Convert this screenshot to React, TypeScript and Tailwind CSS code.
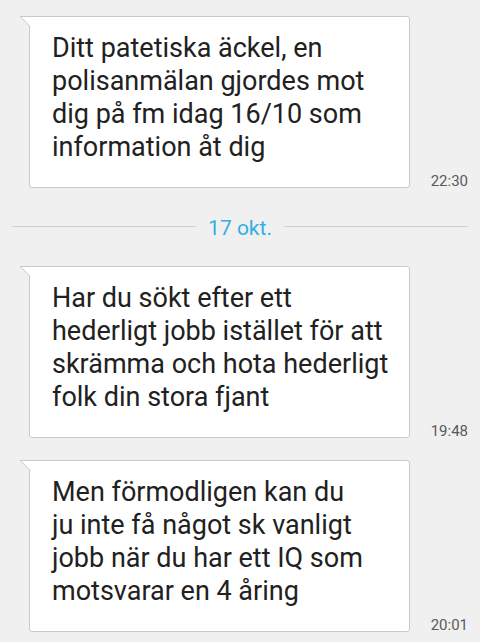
import * as React from "react"

interface Message {
  lines: string[]
  time: string
}

const first: Message[] = [
  {
    lines: ["Ditt patetiska äckel, en", "polisanmälan gjordes mot", "dig på fm idag 16/10 som", "information åt dig"],
    time: "22:30",
  },
]

const second: Message[] = [
  {
    lines: ["Har du sökt efter ett", "hederligt jobb istället för att", "skrämma och hota hederligt", "folk din stora fjant"],
    time: "19:48",
  },
  {
    lines: ["Men förmodligen kan du", "ju inte få något sk vanligt", "jobb när du har ett IQ som", "motsvarar en 4 åring"],
    time: "20:01",
  },
]

function Bubble({ msg }: { msg: Message }) {
  return (
    <div className="flex items-end pl-[29px] pr-[12px]">
      <div className="relative w-[381px] bg-white border border-[#c9c9c9] rounded-[3px] rounded-tl-none pt-[15px] pb-[23px] pl-[22px] pr-2">
        {/* tail */}
        <svg className="absolute left-[-10px] top-[-1px]" width="11" height="12" viewBox="0 0 11 12">
          <path d="M0.5 0.5 L11 0.5 L11 11 Z" fill="#ffffff" />
          <path d="M0 0.5 L11 0.5 M0.5 0.5 L10 10.5" stroke="#c9c9c9" strokeWidth="1" fill="none" />
        </svg>
        <p className="text-[27px] leading-[33px] text-[#212121]">
          {msg.lines.map((l, i) => (
            <React.Fragment key={i}>
              {l}
              {i < msg.lines.length - 1 && <br />}
            </React.Fragment>
          ))}
        </p>
      </div>
      <span className="ml-auto text-[15px] leading-[15px] mb-[-1px] text-[#5a5a5a]">{msg.time}</span>
    </div>
  )
}

export default function App() {
  return (
    <div className="w-[480px] h-[642px] overflow-hidden bg-[#f0f0f0] pt-[16px]" style={{ fontFamily: "Roboto, 'Noto Sans', sans-serif" }}>
      {first.map((m) => (
        <Bubble key={m.time} msg={m} />
      ))}

      <div className="h-[78px] flex items-center gap-[12px] px-[12px] pt-[3px]">
        <div className="flex-1 h-px bg-[#cfcfcf] mb-[5px]" />
        <span className="text-[21px] text-[#33aee3]">17 okt.</span>
        <div className="flex-1 h-px bg-[#cfcfcf] mb-[5px]" />
      </div>

      <div className="flex flex-col gap-[22px]">
        {second.map((m) => (
          <Bubble key={m.time} msg={m} />
        ))}
      </div>
    </div>
  )
}
